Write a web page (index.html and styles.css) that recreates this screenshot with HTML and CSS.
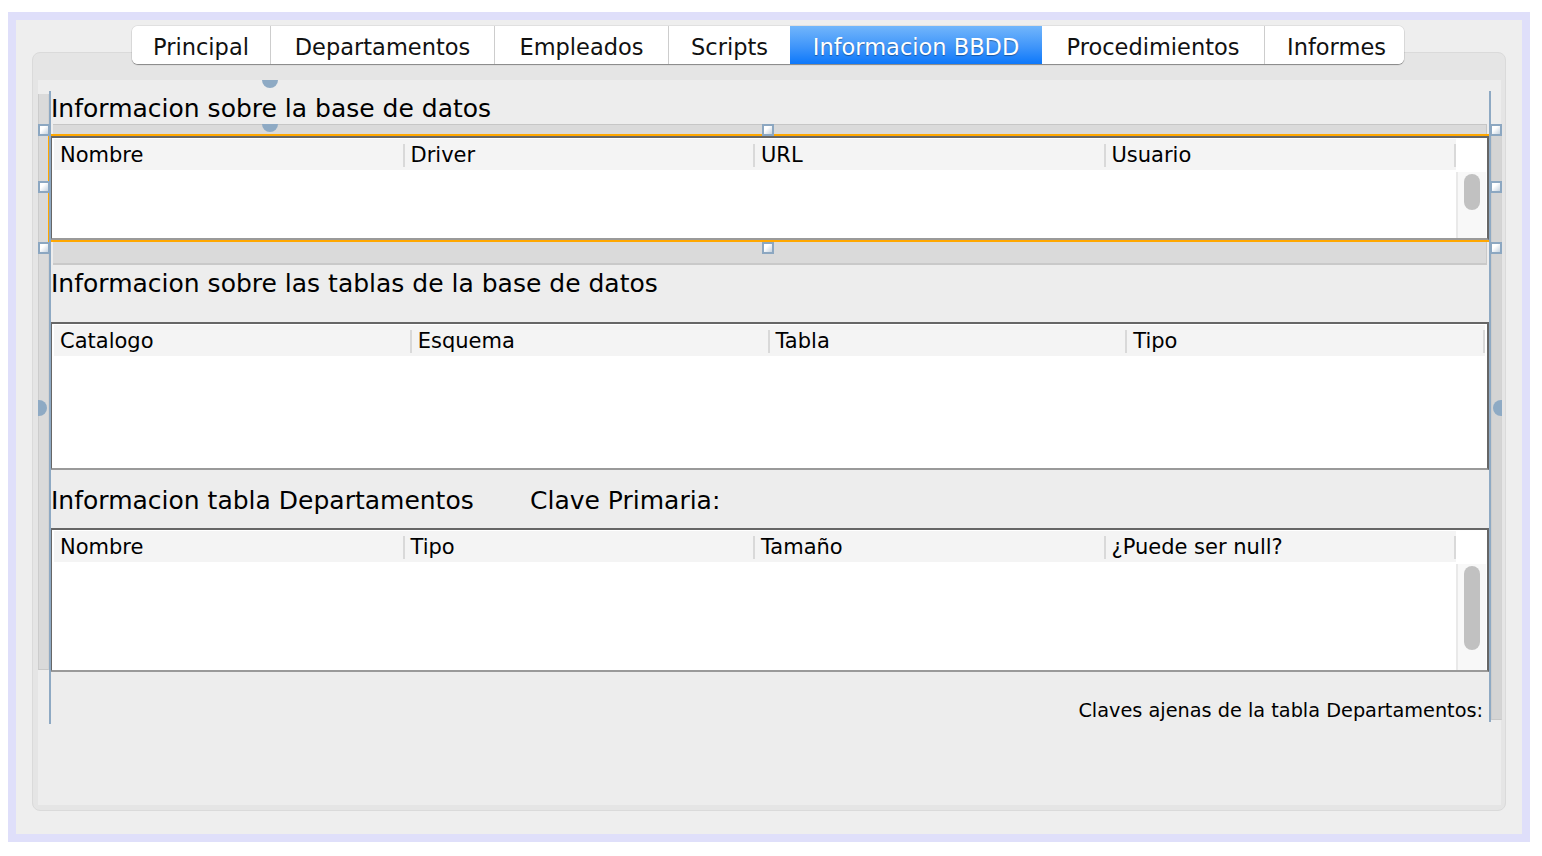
FILE: index.html
```html
<!DOCTYPE html>
<html lang="es">
<head>
<meta charset="utf-8">
<title>Informacion BBDD</title>
<link rel="stylesheet" href="styles.css">
</head>
<body>
<div class="frame">
  <div class="window">
    <div class="tabbar">
      <div class="tabs">
        <div class="tab tab-principal">Principal</div>
        <div class="tab tab-dep">Departamentos</div>
        <div class="tab tab-emp">Empleados</div>
        <div class="tab tab-scr">Scripts</div>
        <div class="tab tab-info active">Informacion BBDD</div>
        <div class="tab tab-proc">Procedimientos</div>
        <div class="tab tab-inf">Informes</div>
      </div>
    </div>
    <div class="panel">
      <div class="content">
        <div class="canvas">
          <div class="heading h1">Informacion sobre la base de datos</div>
          <div class="bar bar-thin"></div>
          <div class="table t1 selected">
            <div class="tmain">
              <div class="thead cols-a">
                <div class="th">Nombre</div>
                <div class="th">Driver</div>
                <div class="th">URL</div>
                <div class="th">Usuario</div>
              </div>
              <div class="tbody"></div>
            </div>
            <div class="vscroll">
              <div class="vs-head"></div>
              <div class="vs-track"><div class="thumb thumb-short"></div></div>
            </div>
          </div>
          <div class="bar bar-thick"></div>
          <div class="heading h2">Informacion sobre las tablas de la base de datos</div>
          <div class="table t2">
            <div class="tmain">
              <div class="thead">
                <div class="th">Catalogo</div>
                <div class="th">Esquema</div>
                <div class="th">Tabla</div>
                <div class="th">Tipo</div>
              </div>
              <div class="tbody"></div>
            </div>
          </div>
          <div class="heading h3">
            <span class="h3-left">Informacion tabla Departamentos</span>
            <span class="h3-right">Clave Primaria:</span>
          </div>
          <div class="table t3">
            <div class="tmain">
              <div class="thead">
                <div class="th">Nombre</div>
                <div class="th">Tipo</div>
                <div class="th">Tamaño</div>
                <div class="th">¿Puede ser null?</div>
              </div>
              <div class="tbody"></div>
            </div>
            <div class="vscroll">
              <div class="vs-head"></div>
              <div class="vs-track"><div class="thumb thumb-long"></div></div>
            </div>
          </div>
          <div class="footer">Claves ajenas de la tabla Departamentos:</div>
        </div>

        <div class="strip strip-left"></div>
        <div class="strip strip-right"></div>
        <div class="guide guide-left"></div>
        <div class="guide guide-right"></div>

        <div class="marker mk-top1"></div>
        <div class="marker mk-top2"></div>
        <div class="marker mk-left"></div>
        <div class="marker mk-right"></div>

        <div class="handle hd-1"></div>
        <div class="handle hd-2"></div>
        <div class="handle hd-3"></div>
        <div class="handle hd-4"></div>
        <div class="handle hd-5"></div>
        <div class="handle hd-6"></div>
        <div class="handle hd-7"></div>
        <div class="handle hd-8"></div>
      </div>
    </div>
  </div>
</div>
</body>
</html>
```
FILE: styles.css
```css
* { box-sizing: border-box; }

html, body {
  margin: 0;
  padding: 0;
  background: #ffffff;
  font-family: "DejaVu Sans", "Noto Sans", sans-serif;
  color: #000;
}

.frame {
  margin: 12px 0 0 8px;
  width: 1522px;
  height: 830px;
  padding: 8px;
  background: #dfdffa;
}

.window {
  height: 814px;
  background: #eeeeee;
  padding-top: 6px;
  display: flex;
  flex-direction: column;
}

/* ---------- tabs ---------- */
.tabbar {
  display: flex;
  justify-content: center;
  padding-right: 2px;
  position: relative;
  z-index: 3;
}

.tabs {
  display: flex;
  height: 38px;
  border-radius: 6px;
  box-shadow: 0 1px 1px rgba(0, 0, 0, 0.38), 0 0 0 1px rgba(0, 0, 0, 0.06);
  background: #fff;
}

.tab {
  height: 38px;
  display: flex;
  align-items: center;
  justify-content: center;
  padding-top: 4px;
  font-size: 22.5px;
  color: #111;
  background: #fff;
  border-left: 1px solid #cdcdcd;
  white-space: nowrap;
}

.tab-principal { width: 138px; border-left: none; border-radius: 6px 0 0 6px; }
.tab-dep { width: 224px; }
.tab-emp { width: 174px; }
.tab-scr { width: 122px; }
.tab-info { width: 252px; }
.tab-proc { width: 222px; border-left: none; }
.tab-inf { width: 140px; border-radius: 0 6px 6px 0; padding-left: 4px; }

.tab.active {
  border-left: none;
  color: #fff;
  background: linear-gradient(#72b6fb, #3f95fa 55%, #0d78fa);
  text-shadow: 0 1px 1px rgba(0, 0, 0, 0.35);
}

/* ---------- panel ---------- */
.panel {
  margin: -12px 16px 0 16px;
  height: 759px;
  background: #e5e5e5;
  border: 1px solid #dadada;
  border-radius: 8px;
  padding: 27px 4px 5px 5px;
}

.content {
  position: relative;
  height: 100%;
  background: #ededed;
  padding: 12px 0 0 12px;
}

.canvas {
  width: 1439px;
  display: flex;
  flex-direction: column;
}

.heading {
  font-size: 25px;
  line-height: 31px;
  padding-left: 1px;
  white-space: nowrap;
}

.h1 { height: 32px; padding-top: 1px; }
.h2 { height: 57px; padding-top: 3px; }
.h3 {
  height: 58px;
  padding-top: 15px;
  display: flex;
}
.h3-left { width: 479px; }

.bar {
  margin: 0 2px 0 3px;
  background: #dadada;
}
.bar-thin {
  height: 10px;
  border-top: 1px solid #c6c6c6;
  border-right: 1px solid #c6c6c6;
}
.bar-thick {
  height: 23px;
  margin-top: 2px;
  border-bottom: 2px solid #c9c9c9;
  border-right: 1px solid #c9c9c9;
}

/* ---------- tables ---------- */
.table {
  display: flex;
  background: #fff;
  border: 2px solid #666;
  border-bottom-color: #9a9a9a;
  padding: 1px 2px 0 2px;
  position: relative;
  z-index: 1;
}

.t1 { height: 104px; margin-top: 2px; padding-right: 1px; }
.t2 { height: 148px; }
.t3 { height: 144px; padding-right: 1px; }

.selected {
  outline: 2px solid #ffa700;
}

.tmain {
  flex: 1;
  display: flex;
  flex-direction: column;
}

.thead {
  height: 31px;
  background: #f4f4f4;
  display: grid;
  grid-template-columns: repeat(4, 1fr);
}

.th {
  position: relative;
  font-size: 21px;
  line-height: 31px;
  padding-top: 1px;
  padding-left: 6px;
  white-space: nowrap;
}
.th::after {
  content: "";
  position: absolute;
  right: 0;
  top: 5px;
  bottom: 4px;
  width: 2px;
  background: #d9d9d9;
}

.tbody { flex: 1; background: #fff; }

.vscroll {
  width: 30px;
  display: flex;
  flex-direction: column;
}
.vs-head { height: 33px; background: #fff; }
.vs-track {
  flex: 1;
  background: #f8f8f8;
  border-left: 2px solid #e9e9e9;
  padding-top: 2px;
}
.thumb {
  width: 16px;
  margin: 0 auto;
  background: #c1c1c1;
  border-radius: 8px;
}
.thumb-short { height: 36px; }
.thumb-long { height: 84px; }

.footer {
  padding: 27px 6px 0 0;
  text-align: right;
  font-size: 19.3px;
  line-height: 24px;
  white-space: nowrap;
}

/* ---------- design canvas overlays ---------- */
.strip {
  position: absolute;
  width: 11px;
  background: #dadada;
  border-left: 1px solid #cccccc;
  border-right: 1px solid #d2d2d2;
  border-bottom: 1px solid #c8c8c8;
}
.strip-left { left: 0; top: 14px; height: 576px; }
.strip-right { left: 1453px; top: 56px; height: 584px; background: #d4d4d4; }

.guide {
  position: absolute;
  width: 2px;
  background: #8ea9c3;
  z-index: 2;
}
.guide-left { left: 11px; top: 11px; height: 633px; }
.guide-right { left: 1451px; top: 11px; height: 631px; }

.marker {
  position: absolute;
  background: #8eaac4;
  z-index: 4;
}
.mk-top1, .mk-top2 { left: 224px; width: 16px; height: 8px; border-radius: 0 0 8px 8px; }
.mk-top1 { top: 0; }
.mk-top2 { top: 44px; }
.mk-left { left: 0; top: 320px; width: 9px; height: 16px; border-radius: 0 8px 8px 0; }
.mk-right { left: 1455px; top: 320px; width: 9px; height: 16px; border-radius: 8px 0 0 8px; }

.handle {
  position: absolute;
  width: 12px;
  height: 12px;
  border: 2px solid #8ca7c1;
  background: linear-gradient(135deg, #ffffff 35%, #c5d2df);
  z-index: 5;
}
.hd-1 { left: 0; top: 44px; }
.hd-2 { left: 724px; top: 44px; }
.hd-3 { left: 1452px; top: 44px; }
.hd-4 { left: 0; top: 101px; }
.hd-5 { left: 1452px; top: 101px; }
.hd-6 { left: 0; top: 162px; }
.hd-7 { left: 724px; top: 162px; }
.hd-8 { left: 1452px; top: 162px; }
```
